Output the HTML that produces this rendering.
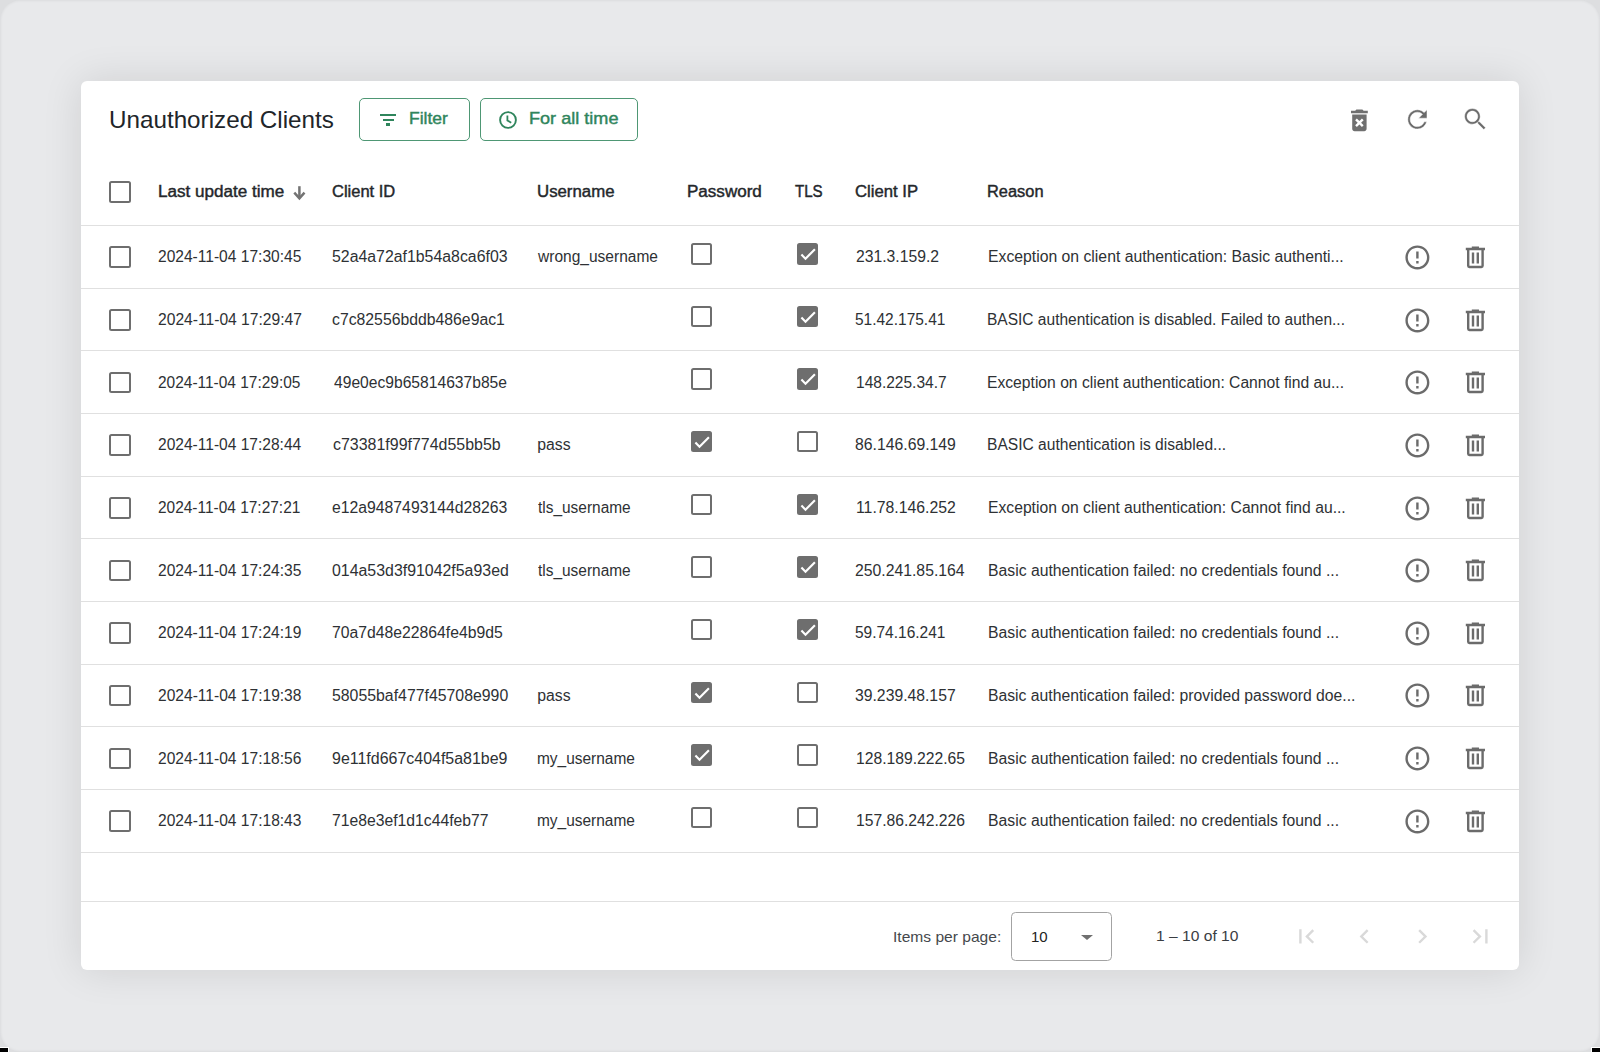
<!DOCTYPE html>
<html><head><meta charset="utf-8"><style>
html,body{margin:0;padding:0;width:1600px;height:1052px;overflow:hidden;background:#dddee0;}
body{position:relative;font-family:"Liberation Sans", sans-serif;}
.frame{position:absolute;left:0;top:0;width:1600px;height:1052px;box-sizing:border-box;border-radius:20px;background:#e8e9eb;box-shadow:inset 0 0 3px 0.5px rgba(0,0,0,0.07);}
.blk{position:absolute;background:#000;width:8px;height:4px;top:1048px;}
.blkw{position:absolute;background:#fff;width:9px;height:5px;top:1047px;}
.card{position:absolute;left:81px;top:81px;width:1438px;height:889px;background:#fff;border-radius:6px;box-shadow:0 0 40px rgba(0,0,0,0.11);}
.t{position:absolute;white-space:pre;line-height:0;transform-origin:0 0;}
.ic{position:absolute;}
.bar{position:absolute;}
.btn{position:absolute;box-sizing:border-box;border:1.4px solid #2f855c;border-radius:5px;opacity:0.85}
.cb{position:absolute;box-sizing:border-box;width:21.6px;height:21.6px;border:2.15px solid #6e6e6e;border-radius:2.5px;}
.hr{position:absolute;left:81px;width:1438px;height:1px;background:#e0e0e0;}
.sel{position:absolute;left:1011px;top:911.8px;width:101.4px;height:49.6px;box-sizing:border-box;border:1.4px solid #a3a3a3;border-radius:4.5px;}
.tri{position:absolute;left:1081.2px;top:934.9px;width:0;height:0;border-left:6.1px solid transparent;border-right:6.1px solid transparent;border-top:5.8px solid #707070;}
</style></head>
<body>
<div class="frame"></div>
<div class="blkw" style="left:0"></div><div class="blkw" style="left:1591px"></div><div class="blk" style="left:0"></div><div class="blk" style="left:1592px"></div>
<div class="card"></div>
<div class="btn" style="left:358.8px;top:98px;width:111px;height:42.8px"></div>
<div class="btn" style="left:479.5px;top:98.2px;width:158.6px;height:43px"></div>
<svg class="ic" style="left:1345.10px;top:105.90px;width:28.80px;height:28.80px" viewBox="0 0 24 24"><path fill="#707070" d="M6 19c0 1.1.9 2 2 2h8c1.1 0 2-.9 2-2V7H6v12zm2.46-7.12l1.41-1.41L12 12.59l2.12-2.12 1.41 1.41L13.41 14l2.12 2.12-1.41 1.41L12 15.41l-2.12 2.12-1.41-1.41L10.59 14l-2.13-2.12zM15.5 4l-1-1h-5l-1 1H5v2h14V4z"/></svg>
<svg class="ic" style="left:1403.20px;top:105.40px;width:28.80px;height:28.80px" viewBox="0 0 24 24"><path fill="#6a6a6a" stroke="#fff" stroke-width="0.4" d="M17.65 6.35C16.2 4.9 14.21 4 12 4c-4.42 0-7.99 3.58-7.99 8s3.57 8 7.99 8c3.73 0 6.84-2.55 7.73-6h-2.08c-.82 2.330-3.04 4-5.65 4-3.31 0-6-2.69-6-6s2.69-6 6-6c1.66 0 3.14.69 4.22 1.78L13 11h7V4l-2.35 2.35z"/></svg>
<svg class="ic" style="left:1460.90px;top:105.30px;width:28.80px;height:28.80px" viewBox="0 0 24 24"><path fill="#6a6a6a" stroke="#fff" stroke-width="0.4" d="M15.5 14h-.79l-.28-.27C15.41 12.59 16 11.110 16 9.5 16 5.91 13.09 3 9.5 3S3 5.91 3 9.5 5.91 16 9.5 16c1.61 0 3.09-.59 4.23-1.57l.27.28v.79l5 4.99L20.49 19l-4.99-5zm-6 0C7.01 14 5 11.99 5 9.5S7.01 5 9.5 5 14 7.01 14 9.5 11.99 14 9.5 14z"/></svg>
<div class="bar" style="left:379.5px;top:113.8px;width:16.5px;height:2.2px;background:#2f855c"></div>
<div class="bar" style="left:382.75px;top:118.7px;width:11.25px;height:2.2px;background:#2f855c"></div>
<div class="bar" style="left:385.75px;top:123.3px;width:4.5px;height:2.4px;background:#2f855c"></div>
<svg class="ic" style="left:497px;top:108.5px;width:22px;height:22px" viewBox="0 0 22 22"><circle cx="11" cy="11" r="7.9" fill="none" stroke="#2f855c" stroke-width="1.9"/><path d="M10.4 6.6V11.4L14.2 13.8" fill="none" stroke="#2f855c" stroke-width="1.8"/></svg>
<svg class="ic" style="left:285px;top:180px;width:30px;height:25px" viewBox="285 180 30 25"><path d="M299.4 186.2V198.2" stroke="#737373" stroke-width="2.5" fill="none"/><path d="M294.3 192.6L299.4 198.3L304.5 192.6" stroke="#737373" stroke-width="2.5" fill="none" stroke-linejoin="miter"/></svg>
<div class="cb" style="left:109px;top:181px;border-color:#6e6e6e"></div>
<div class="hr" style="top:225.00px"></div>
<div class="hr" style="top:287.65px"></div>
<div class="hr" style="top:350.30px"></div>
<div class="hr" style="top:412.95px"></div>
<div class="hr" style="top:475.60px"></div>
<div class="hr" style="top:538.25px"></div>
<div class="hr" style="top:600.90px"></div>
<div class="hr" style="top:663.55px"></div>
<div class="hr" style="top:726.20px"></div>
<div class="hr" style="top:788.85px"></div>
<div class="hr" style="top:851.50px"></div>
<div class="hr" style="top:901px"></div>
<div class="cb" style="left:109.2px;top:246.4px;border-color:#6e6e6e"></div>
<div class="cb" style="left:690.6px;top:243.0px;border-color:#6e6e6e"></div>
<div class="cb on" style="left:796.9px;top:243.0px;background:#6e6e6e;border-color:#6e6e6e"><svg viewBox="0 0 24 24" style="position:absolute;left:-1px;top:-1px;width:20px;height:20px"><path fill="none" stroke="#fff" stroke-width="2.6" d="M4.1 12.7L9 17.6 20.3 6.3"/></svg></div>
<svg class="ic" style="left:1402.90px;top:242.90px;width:28.80px;height:28.80px" viewBox="0 0 24 24"><path fill="#6b6b6b" d="M11 15h2v2h-2zm0-8h2v6h-2zm.99-5C6.47 2 2 6.48 2 12s4.47 10 9.99 10C17.52 22 22 17.52 22 12S17.52 2 11.99 2zM12 20c-4.42 0-8-3.580-8-8s3.58-8 8-8 8 3.58 8 8-3.58 8-8 8z"/></svg>
<svg class="ic" style="left:1461.10px;top:242.90px;width:28.80px;height:28.80px" viewBox="0 0 24 24"><path fill="#6b6b6b" d="M9,3V4H4V6H5V19A2,2 0 0,0 7,21H17A2,2 0 0,0 19,19V6H20V4H15V3H9M7,6H17V19H7V6M9,8V17H11V8H9M13,8V17H15V8H13Z"/></svg>
<div class="cb" style="left:109.2px;top:309.1px;border-color:#6e6e6e"></div>
<div class="cb" style="left:690.6px;top:305.6px;border-color:#6e6e6e"></div>
<div class="cb on" style="left:796.9px;top:305.6px;background:#6e6e6e;border-color:#6e6e6e"><svg viewBox="0 0 24 24" style="position:absolute;left:-1px;top:-1px;width:20px;height:20px"><path fill="none" stroke="#fff" stroke-width="2.6" d="M4.1 12.7L9 17.6 20.3 6.3"/></svg></div>
<svg class="ic" style="left:1402.90px;top:305.55px;width:28.80px;height:28.80px" viewBox="0 0 24 24"><path fill="#6b6b6b" d="M11 15h2v2h-2zm0-8h2v6h-2zm.99-5C6.47 2 2 6.48 2 12s4.47 10 9.99 10C17.52 22 22 17.52 22 12S17.52 2 11.99 2zM12 20c-4.42 0-8-3.580-8-8s3.58-8 8-8 8 3.58 8 8-3.58 8-8 8z"/></svg>
<svg class="ic" style="left:1461.10px;top:305.55px;width:28.80px;height:28.80px" viewBox="0 0 24 24"><path fill="#6b6b6b" d="M9,3V4H4V6H5V19A2,2 0 0,0 7,21H17A2,2 0 0,0 19,19V6H20V4H15V3H9M7,6H17V19H7V6M9,8V17H11V8H9M13,8V17H15V8H13Z"/></svg>
<div class="cb" style="left:109.2px;top:371.7px;border-color:#6e6e6e"></div>
<div class="cb" style="left:690.6px;top:368.3px;border-color:#6e6e6e"></div>
<div class="cb on" style="left:796.9px;top:368.3px;background:#6e6e6e;border-color:#6e6e6e"><svg viewBox="0 0 24 24" style="position:absolute;left:-1px;top:-1px;width:20px;height:20px"><path fill="none" stroke="#fff" stroke-width="2.6" d="M4.1 12.7L9 17.6 20.3 6.3"/></svg></div>
<svg class="ic" style="left:1402.90px;top:368.20px;width:28.80px;height:28.80px" viewBox="0 0 24 24"><path fill="#6b6b6b" d="M11 15h2v2h-2zm0-8h2v6h-2zm.99-5C6.47 2 2 6.48 2 12s4.47 10 9.99 10C17.52 22 22 17.52 22 12S17.52 2 11.99 2zM12 20c-4.42 0-8-3.580-8-8s3.58-8 8-8 8 3.58 8 8-3.58 8-8 8z"/></svg>
<svg class="ic" style="left:1461.10px;top:368.20px;width:28.80px;height:28.80px" viewBox="0 0 24 24"><path fill="#6b6b6b" d="M9,3V4H4V6H5V19A2,2 0 0,0 7,21H17A2,2 0 0,0 19,19V6H20V4H15V3H9M7,6H17V19H7V6M9,8V17H11V8H9M13,8V17H15V8H13Z"/></svg>
<div class="cb" style="left:109.2px;top:434.4px;border-color:#6e6e6e"></div>
<div class="cb on" style="left:690.6px;top:430.9px;background:#6e6e6e;border-color:#6e6e6e"><svg viewBox="0 0 24 24" style="position:absolute;left:-1px;top:-1px;width:20px;height:20px"><path fill="none" stroke="#fff" stroke-width="2.6" d="M4.1 12.7L9 17.6 20.3 6.3"/></svg></div>
<div class="cb" style="left:796.9px;top:430.9px;border-color:#6e6e6e"></div>
<svg class="ic" style="left:1402.90px;top:430.85px;width:28.80px;height:28.80px" viewBox="0 0 24 24"><path fill="#6b6b6b" d="M11 15h2v2h-2zm0-8h2v6h-2zm.99-5C6.47 2 2 6.48 2 12s4.47 10 9.99 10C17.52 22 22 17.52 22 12S17.52 2 11.99 2zM12 20c-4.42 0-8-3.580-8-8s3.58-8 8-8 8 3.58 8 8-3.58 8-8 8z"/></svg>
<svg class="ic" style="left:1461.10px;top:430.85px;width:28.80px;height:28.80px" viewBox="0 0 24 24"><path fill="#6b6b6b" d="M9,3V4H4V6H5V19A2,2 0 0,0 7,21H17A2,2 0 0,0 19,19V6H20V4H15V3H9M7,6H17V19H7V6M9,8V17H11V8H9M13,8V17H15V8H13Z"/></svg>
<div class="cb" style="left:109.2px;top:497.0px;border-color:#6e6e6e"></div>
<div class="cb" style="left:690.6px;top:493.6px;border-color:#6e6e6e"></div>
<div class="cb on" style="left:796.9px;top:493.6px;background:#6e6e6e;border-color:#6e6e6e"><svg viewBox="0 0 24 24" style="position:absolute;left:-1px;top:-1px;width:20px;height:20px"><path fill="none" stroke="#fff" stroke-width="2.6" d="M4.1 12.7L9 17.6 20.3 6.3"/></svg></div>
<svg class="ic" style="left:1402.90px;top:493.50px;width:28.80px;height:28.80px" viewBox="0 0 24 24"><path fill="#6b6b6b" d="M11 15h2v2h-2zm0-8h2v6h-2zm.99-5C6.47 2 2 6.48 2 12s4.47 10 9.99 10C17.52 22 22 17.52 22 12S17.52 2 11.99 2zM12 20c-4.42 0-8-3.580-8-8s3.58-8 8-8 8 3.58 8 8-3.58 8-8 8z"/></svg>
<svg class="ic" style="left:1461.10px;top:493.50px;width:28.80px;height:28.80px" viewBox="0 0 24 24"><path fill="#6b6b6b" d="M9,3V4H4V6H5V19A2,2 0 0,0 7,21H17A2,2 0 0,0 19,19V6H20V4H15V3H9M7,6H17V19H7V6M9,8V17H11V8H9M13,8V17H15V8H13Z"/></svg>
<div class="cb" style="left:109.2px;top:559.6px;border-color:#6e6e6e"></div>
<div class="cb" style="left:690.6px;top:556.2px;border-color:#6e6e6e"></div>
<div class="cb on" style="left:796.9px;top:556.2px;background:#6e6e6e;border-color:#6e6e6e"><svg viewBox="0 0 24 24" style="position:absolute;left:-1px;top:-1px;width:20px;height:20px"><path fill="none" stroke="#fff" stroke-width="2.6" d="M4.1 12.7L9 17.6 20.3 6.3"/></svg></div>
<svg class="ic" style="left:1402.90px;top:556.15px;width:28.80px;height:28.80px" viewBox="0 0 24 24"><path fill="#6b6b6b" d="M11 15h2v2h-2zm0-8h2v6h-2zm.99-5C6.47 2 2 6.48 2 12s4.47 10 9.99 10C17.52 22 22 17.52 22 12S17.52 2 11.99 2zM12 20c-4.42 0-8-3.580-8-8s3.58-8 8-8 8 3.58 8 8-3.58 8-8 8z"/></svg>
<svg class="ic" style="left:1461.10px;top:556.15px;width:28.80px;height:28.80px" viewBox="0 0 24 24"><path fill="#6b6b6b" d="M9,3V4H4V6H5V19A2,2 0 0,0 7,21H17A2,2 0 0,0 19,19V6H20V4H15V3H9M7,6H17V19H7V6M9,8V17H11V8H9M13,8V17H15V8H13Z"/></svg>
<div class="cb" style="left:109.2px;top:622.3px;border-color:#6e6e6e"></div>
<div class="cb" style="left:690.6px;top:618.9px;border-color:#6e6e6e"></div>
<div class="cb on" style="left:796.9px;top:618.9px;background:#6e6e6e;border-color:#6e6e6e"><svg viewBox="0 0 24 24" style="position:absolute;left:-1px;top:-1px;width:20px;height:20px"><path fill="none" stroke="#fff" stroke-width="2.6" d="M4.1 12.7L9 17.6 20.3 6.3"/></svg></div>
<svg class="ic" style="left:1402.90px;top:618.80px;width:28.80px;height:28.80px" viewBox="0 0 24 24"><path fill="#6b6b6b" d="M11 15h2v2h-2zm0-8h2v6h-2zm.99-5C6.47 2 2 6.48 2 12s4.47 10 9.99 10C17.52 22 22 17.52 22 12S17.52 2 11.99 2zM12 20c-4.42 0-8-3.580-8-8s3.58-8 8-8 8 3.58 8 8-3.58 8-8 8z"/></svg>
<svg class="ic" style="left:1461.10px;top:618.80px;width:28.80px;height:28.80px" viewBox="0 0 24 24"><path fill="#6b6b6b" d="M9,3V4H4V6H5V19A2,2 0 0,0 7,21H17A2,2 0 0,0 19,19V6H20V4H15V3H9M7,6H17V19H7V6M9,8V17H11V8H9M13,8V17H15V8H13Z"/></svg>
<div class="cb" style="left:109.2px;top:684.9px;border-color:#6e6e6e"></div>
<div class="cb on" style="left:690.6px;top:681.5px;background:#6e6e6e;border-color:#6e6e6e"><svg viewBox="0 0 24 24" style="position:absolute;left:-1px;top:-1px;width:20px;height:20px"><path fill="none" stroke="#fff" stroke-width="2.6" d="M4.1 12.7L9 17.6 20.3 6.3"/></svg></div>
<div class="cb" style="left:796.9px;top:681.5px;border-color:#6e6e6e"></div>
<svg class="ic" style="left:1402.90px;top:681.45px;width:28.80px;height:28.80px" viewBox="0 0 24 24"><path fill="#6b6b6b" d="M11 15h2v2h-2zm0-8h2v6h-2zm.99-5C6.47 2 2 6.48 2 12s4.47 10 9.99 10C17.52 22 22 17.52 22 12S17.52 2 11.99 2zM12 20c-4.42 0-8-3.580-8-8s3.58-8 8-8 8 3.58 8 8-3.58 8-8 8z"/></svg>
<svg class="ic" style="left:1461.10px;top:681.45px;width:28.80px;height:28.80px" viewBox="0 0 24 24"><path fill="#6b6b6b" d="M9,3V4H4V6H5V19A2,2 0 0,0 7,21H17A2,2 0 0,0 19,19V6H20V4H15V3H9M7,6H17V19H7V6M9,8V17H11V8H9M13,8V17H15V8H13Z"/></svg>
<div class="cb" style="left:109.2px;top:747.6px;border-color:#6e6e6e"></div>
<div class="cb on" style="left:690.6px;top:744.2px;background:#6e6e6e;border-color:#6e6e6e"><svg viewBox="0 0 24 24" style="position:absolute;left:-1px;top:-1px;width:20px;height:20px"><path fill="none" stroke="#fff" stroke-width="2.6" d="M4.1 12.7L9 17.6 20.3 6.3"/></svg></div>
<div class="cb" style="left:796.9px;top:744.2px;border-color:#6e6e6e"></div>
<svg class="ic" style="left:1402.90px;top:744.10px;width:28.80px;height:28.80px" viewBox="0 0 24 24"><path fill="#6b6b6b" d="M11 15h2v2h-2zm0-8h2v6h-2zm.99-5C6.47 2 2 6.48 2 12s4.47 10 9.99 10C17.52 22 22 17.52 22 12S17.52 2 11.99 2zM12 20c-4.42 0-8-3.580-8-8s3.58-8 8-8 8 3.58 8 8-3.58 8-8 8z"/></svg>
<svg class="ic" style="left:1461.10px;top:744.10px;width:28.80px;height:28.80px" viewBox="0 0 24 24"><path fill="#6b6b6b" d="M9,3V4H4V6H5V19A2,2 0 0,0 7,21H17A2,2 0 0,0 19,19V6H20V4H15V3H9M7,6H17V19H7V6M9,8V17H11V8H9M13,8V17H15V8H13Z"/></svg>
<div class="cb" style="left:109.2px;top:810.2px;border-color:#6e6e6e"></div>
<div class="cb" style="left:690.6px;top:806.9px;border-color:#6e6e6e"></div>
<div class="cb" style="left:796.9px;top:806.9px;border-color:#6e6e6e"></div>
<svg class="ic" style="left:1402.90px;top:806.75px;width:28.80px;height:28.80px" viewBox="0 0 24 24"><path fill="#6b6b6b" d="M11 15h2v2h-2zm0-8h2v6h-2zm.99-5C6.47 2 2 6.48 2 12s4.47 10 9.99 10C17.52 22 22 17.52 22 12S17.52 2 11.99 2zM12 20c-4.42 0-8-3.580-8-8s3.58-8 8-8 8 3.58 8 8-3.58 8-8 8z"/></svg>
<svg class="ic" style="left:1461.10px;top:806.75px;width:28.80px;height:28.80px" viewBox="0 0 24 24"><path fill="#6b6b6b" d="M9,3V4H4V6H5V19A2,2 0 0,0 7,21H17A2,2 0 0,0 19,19V6H20V4H15V3H9M7,6H17V19H7V6M9,8V17H11V8H9M13,8V17H15V8H13Z"/></svg>
<div class="sel"></div>
<div class="tri"></div>
<svg class="ic" style="left:1292.10px;top:921.90px;width:28.80px;height:28.80px" viewBox="0 0 24 24"><path fill="#d9d9d9" d="M18.41 16.59L13.82 12l4.59-4.59L17 6l-6 6 6 6zM6 6h2v12H6z"/></svg>
<svg class="ic" style="left:1350.20px;top:921.90px;width:28.80px;height:28.80px" viewBox="0 0 24 24"><path fill="#d9d9d9" d="M15.41 7.41L14 6l-6 6 6 6 1.41-1.41L10.83 12z"/></svg>
<svg class="ic" style="left:1408.30px;top:921.90px;width:28.80px;height:28.80px" viewBox="0 0 24 24"><path fill="#d9d9d9" d="M10 6L8.59 7.41 13.17 12l-4.58 4.59L10 18l6-6z"/></svg>
<svg class="ic" style="left:1466.00px;top:921.90px;width:28.80px;height:28.80px" viewBox="0 0 24 24"><path fill="#d9d9d9" d="M5.59 7.41L10.18 12l-4.59 4.59L7 18l6-6-6-6zM16 6h2v12h-2z"/></svg>
<div class="t" style="left:109.26px;top:119.62px;font-size:23.600px;font-weight:400;color:#212529;transform:scaleX(1.0268)">Unauthorized Clients</div>
<div class="t" style="left:408.90px;top:119.41px;font-size:17.000px;font-weight:400;-webkit-text-stroke:0.42px #2f855c;color:#2f855c;transform:scaleX(1.0289)">Filter</div>
<div class="t" style="left:529.15px;top:119.11px;font-size:17.000px;font-weight:400;-webkit-text-stroke:0.42px #2f855c;color:#2f855c;transform:scaleX(1.0647)">For all time</div>
<div class="t" style="left:158.49px;top:191.76px;font-size:16.000px;font-weight:400;-webkit-text-stroke:0.42px #24272b;color:#24272b;transform:scaleX(1.0675)">Last update time</div>
<div class="t" style="left:332.15px;top:191.76px;font-size:16.000px;font-weight:400;-webkit-text-stroke:0.42px #24272b;color:#24272b;transform:scaleX(1.0308)">Client ID</div>
<div class="t" style="left:537.39px;top:191.76px;font-size:16.000px;font-weight:400;-webkit-text-stroke:0.42px #24272b;color:#24272b;transform:scaleX(1.0498)">Username</div>
<div class="t" style="left:687.14px;top:191.76px;font-size:16.000px;font-weight:400;-webkit-text-stroke:0.42px #24272b;color:#24272b;transform:scaleX(1.0653)">Password</div>
<div class="t" style="left:794.55px;top:191.76px;font-size:16.000px;font-weight:400;-webkit-text-stroke:0.42px #24272b;color:#24272b;transform:scaleX(0.9437)">TLS</div>
<div class="t" style="left:855.47px;top:191.76px;font-size:16.000px;font-weight:400;-webkit-text-stroke:0.42px #24272b;color:#24272b;transform:scaleX(1.0430)">Client IP</div>
<div class="t" style="left:987.47px;top:191.76px;font-size:16.000px;font-weight:400;-webkit-text-stroke:0.42px #24272b;color:#24272b;transform:scaleX(1.0247)">Reason</div>
<div class="t" style="left:157.76px;top:257.33px;font-size:15.800px;font-weight:400;color:#2e3134;transform:scaleX(0.9849)">2024-11-04 17:30:45</div>
<div class="t" style="left:332.48px;top:257.33px;font-size:15.800px;font-weight:400;color:#2e3134;transform:scaleX(1.0041)">52a4a72af1b54a8ca6f03</div>
<div class="t" style="left:538.05px;top:257.33px;font-size:15.800px;font-weight:400;color:#2e3134;transform:scaleX(0.9829)">wrong_username</div>
<div class="t" style="left:855.60px;top:257.33px;font-size:15.800px;font-weight:400;color:#2e3134;transform:scaleX(0.9951)">231.3.159.2</div>
<div class="t" style="left:987.81px;top:257.33px;font-size:15.800px;font-weight:400;color:#2e3134;transform:scaleX(0.9976)">Exception on client authentication: Basic authenti...</div>
<div class="t" style="left:157.86px;top:319.98px;font-size:15.800px;font-weight:400;color:#2e3134;transform:scaleX(0.9893)">2024-11-04 17:29:47</div>
<div class="t" style="left:332.30px;top:319.98px;font-size:15.800px;font-weight:400;color:#2e3134;transform:scaleX(0.9989)">c7c82556bddb486e9ac1</div>
<div class="t" style="left:855.40px;top:319.98px;font-size:15.800px;font-weight:400;color:#2e3134;transform:scaleX(0.9797)">51.42.175.41</div>
<div class="t" style="left:987.32px;top:319.98px;font-size:15.800px;font-weight:400;color:#2e3134;transform:scaleX(0.9822)">BASIC authentication is disabled. Failed to authen...</div>
<div class="t" style="left:157.87px;top:382.63px;font-size:15.800px;font-weight:400;color:#2e3134;transform:scaleX(0.9791)">2024-11-04 17:29:05</div>
<div class="t" style="left:333.82px;top:382.63px;font-size:15.800px;font-weight:400;color:#2e3134;transform:scaleX(0.9896)">49e0ec9b65814637b85e</div>
<div class="t" style="left:855.84px;top:382.63px;font-size:15.800px;font-weight:400;color:#2e3134;transform:scaleX(0.9820)">148.225.34.7</div>
<div class="t" style="left:987.32px;top:382.63px;font-size:15.800px;font-weight:400;color:#2e3134;transform:scaleX(0.9916)">Exception on client authentication: Cannot find au...</div>
<div class="t" style="left:157.76px;top:445.28px;font-size:15.800px;font-weight:400;color:#2e3134;transform:scaleX(0.9842)">2024-11-04 17:28:44</div>
<div class="t" style="left:332.66px;top:445.28px;font-size:15.800px;font-weight:400;color:#2e3134;transform:scaleX(1.0102)">c73381f99f774d55bb5b</div>
<div class="t" style="left:537.30px;top:445.28px;font-size:15.800px;font-weight:400;color:#2e3134;transform:scaleX(1.0000)">pass</div>
<div class="t" style="left:855.36px;top:445.28px;font-size:15.800px;font-weight:400;color:#2e3134;transform:scaleX(0.9986)">86.146.69.149</div>
<div class="t" style="left:987.16px;top:445.28px;font-size:15.800px;font-weight:400;color:#2e3134;transform:scaleX(0.9864)">BASIC authentication is disabled...</div>
<div class="t" style="left:157.77px;top:507.93px;font-size:15.800px;font-weight:400;color:#2e3134;transform:scaleX(0.9781)">2024-11-04 17:27:21</div>
<div class="t" style="left:332.30px;top:507.93px;font-size:15.800px;font-weight:400;color:#2e3134;transform:scaleX(0.9977)">e12a9487493144d28263</div>
<div class="t" style="left:537.86px;top:507.93px;font-size:15.800px;font-weight:400;color:#2e3134;transform:scaleX(0.9776)">tls_username</div>
<div class="t" style="left:856.00px;top:507.93px;font-size:15.800px;font-weight:400;color:#2e3134;transform:scaleX(1.0000)">11.78.146.252</div>
<div class="t" style="left:987.59px;top:507.93px;font-size:15.800px;font-weight:400;color:#2e3134;transform:scaleX(0.9935)">Exception on client authentication: Cannot find au...</div>
<div class="t" style="left:157.76px;top:570.58px;font-size:15.800px;font-weight:400;color:#2e3134;transform:scaleX(0.9849)">2024-11-04 17:24:35</div>
<div class="t" style="left:332.38px;top:570.58px;font-size:15.800px;font-weight:400;color:#2e3134;transform:scaleX(1.0063)">014a53d3f91042f5a93ed</div>
<div class="t" style="left:537.86px;top:570.58px;font-size:15.800px;font-weight:400;color:#2e3134;transform:scaleX(0.9776)">tls_username</div>
<div class="t" style="left:855.37px;top:570.58px;font-size:15.800px;font-weight:400;color:#2e3134;transform:scaleX(0.9980)">250.241.85.164</div>
<div class="t" style="left:987.81px;top:570.58px;font-size:15.800px;font-weight:400;color:#2e3134;transform:scaleX(0.9969)">Basic authentication failed: no credentials found ...</div>
<div class="t" style="left:157.86px;top:633.23px;font-size:15.800px;font-weight:400;color:#2e3134;transform:scaleX(0.9851)">2024-11-04 17:24:19</div>
<div class="t" style="left:332.23px;top:633.23px;font-size:15.800px;font-weight:400;color:#2e3134;transform:scaleX(0.9967)">70a7d48e22864fe4b9d5</div>
<div class="t" style="left:855.40px;top:633.23px;font-size:15.800px;font-weight:400;color:#2e3134;transform:scaleX(0.9797)">59.74.16.241</div>
<div class="t" style="left:987.81px;top:633.23px;font-size:15.800px;font-weight:400;color:#2e3134;transform:scaleX(0.9969)">Basic authentication failed: no credentials found ...</div>
<div class="t" style="left:157.86px;top:695.88px;font-size:15.800px;font-weight:400;color:#2e3134;transform:scaleX(0.9857)">2024-11-04 17:19:38</div>
<div class="t" style="left:332.47px;top:695.88px;font-size:15.800px;font-weight:400;color:#2e3134;transform:scaleX(1.0029)">58055baf477f45708e990</div>
<div class="t" style="left:537.30px;top:695.88px;font-size:15.800px;font-weight:400;color:#2e3134;transform:scaleX(1.0000)">pass</div>
<div class="t" style="left:855.24px;top:695.88px;font-size:15.800px;font-weight:400;color:#2e3134;transform:scaleX(0.9961)">39.239.48.157</div>
<div class="t" style="left:987.81px;top:695.88px;font-size:15.800px;font-weight:400;color:#2e3134;transform:scaleX(0.9963)">Basic authentication failed: provided password doe...</div>
<div class="t" style="left:157.86px;top:758.53px;font-size:15.800px;font-weight:400;color:#2e3134;transform:scaleX(0.9856)">2024-11-04 17:18:56</div>
<div class="t" style="left:332.36px;top:758.53px;font-size:15.800px;font-weight:400;color:#2e3134;transform:scaleX(1.0106)">9e11fd667c404f5a81be9</div>
<div class="t" style="left:537.21px;top:758.53px;font-size:15.800px;font-weight:400;color:#2e3134;transform:scaleX(0.9782)">my_username</div>
<div class="t" style="left:855.68px;top:758.53px;font-size:15.800px;font-weight:400;color:#2e3134;transform:scaleX(0.9931)">128.189.222.65</div>
<div class="t" style="left:987.81px;top:758.53px;font-size:15.800px;font-weight:400;color:#2e3134;transform:scaleX(0.9969)">Basic authentication failed: no credentials found ...</div>
<div class="t" style="left:157.86px;top:821.18px;font-size:15.800px;font-weight:400;color:#2e3134;transform:scaleX(0.9857)">2024-11-04 17:18:43</div>
<div class="t" style="left:332.31px;top:821.18px;font-size:15.800px;font-weight:400;color:#2e3134;transform:scaleX(0.9957)">71e8e3ef1d1c44feb77</div>
<div class="t" style="left:537.21px;top:821.18px;font-size:15.800px;font-weight:400;color:#2e3134;transform:scaleX(0.9782)">my_username</div>
<div class="t" style="left:855.68px;top:821.18px;font-size:15.800px;font-weight:400;color:#2e3134;transform:scaleX(0.9928)">157.86.242.226</div>
<div class="t" style="left:987.81px;top:821.18px;font-size:15.800px;font-weight:400;color:#2e3134;transform:scaleX(0.9969)">Basic authentication failed: no credentials found ...</div>
<div class="t" style="left:892.83px;top:936.94px;font-size:14.600px;font-weight:400;color:#45484c;transform:scaleX(1.0679)">Items per page:</div>
<div class="t" style="left:1031.00px;top:936.80px;font-size:15.000px;font-weight:400;color:#222;transform:scaleX(1.0000)">10</div>
<div class="t" style="left:1155.96px;top:935.80px;font-size:15.000px;font-weight:400;color:#3a3d42;transform:scaleX(1.0399)">1 – 10 of 10</div>
</body></html>
